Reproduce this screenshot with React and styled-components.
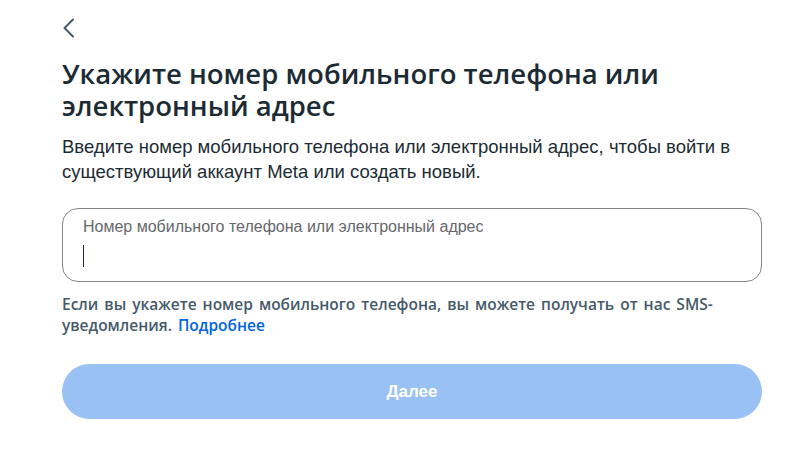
import React from "react";
import styled, { createGlobalStyle } from "styled-components";

const Global = createGlobalStyle`
  html, body { margin: 0; padding: 0; background: #ffffff; }
  body { font-family: "Open Sans", "Liberation Sans", sans-serif; color: #1c2b33; }
`;

const Page = styled.div`
  width: 700px;
  padding: 16px 0 0 62px;
  display: flex;
  flex-direction: column;
`;

const BackButton = styled.button`
  width: 14px;
  height: 24px;
  padding: 0;
  border: 0;
  background: none;
  display: flex;
  align-items: center;
  color: #465a69;
  cursor: pointer;
`;

const Title = styled.h1`
  margin: 18px 0 0;
  font-family: "Open Sans", sans-serif;
  font-weight: 600;
  font-size: 27.5px;
  line-height: 32px;
  color: #1c2b33;
`;

const Subtitle = styled.p`
  margin: 12px 0 0;
  font-family: "Liberation Sans", sans-serif;
  font-size: 18.5px;
  line-height: 25px;
  color: #1c2b33;
`;

const Field = styled.label`
  margin-top: 24px;
  height: 74px;
  box-sizing: border-box;
  border: 1px solid #80868b;
  border-radius: 16px;
  padding: 8px 20px;
  display: flex;
  flex-direction: column;
`;

const FieldLabel = styled.span`
  font-family: "Liberation Sans", sans-serif;
  font-size: 16px;
  line-height: 20px;
  color: #65676b;
`;

const Caret = styled.span`
  margin-top: 8px;
  width: 1px;
  height: 22px;
  background: #1c2b33;
`;

const Helper = styled.p`
  margin: 12px 0 0;
  font-family: "Open Sans", sans-serif;
  font-weight: 600;
  font-size: 15.5px;
  word-spacing: 2px;
  line-height: 21px;
  color: #465a69;
`;

const Link = styled.a`
  color: #0064e0;
  text-decoration: none;
`;

const NextButton = styled.button`
  margin-top: 28px;
  height: 55px;
  width: 100%;
  border: 0;
  border-radius: 28px;
  background: #99c1f3;
  color: #ffffff;
  font-family: "Liberation Sans", sans-serif;
  font-weight: 700;
  font-size: 17px;
`;

export default function App() {
  return (
    <>
      <Global />
      <Page>
        <BackButton aria-label="Назад">
          <svg width="13" height="20" viewBox="0 0 13 20" fill="none">
            <path d="M11 1.5L2.5 10L11 18.5" stroke="currentColor" strokeWidth="2" strokeLinecap="round" strokeLinejoin="round" />
          </svg>
        </BackButton>
        <Title>Укажите номер мобильного телефона или электронный адрес</Title>
        <Subtitle>
          Введите номер мобильного телефона или электронный адрес, чтобы войти в существующий аккаунт Meta или создать новый.
        </Subtitle>
        <Field>
          <FieldLabel>Номер мобильного телефона или электронный адрес</FieldLabel>
          <Caret />
        </Field>
        <Helper>
          Если вы укажете номер мобильного телефона, вы можете получать от нас SMS-уведомления. <Link href="#">Подробнее</Link>
        </Helper>
        <NextButton disabled>Далее</NextButton>
      </Page>
    </>
  );
}
